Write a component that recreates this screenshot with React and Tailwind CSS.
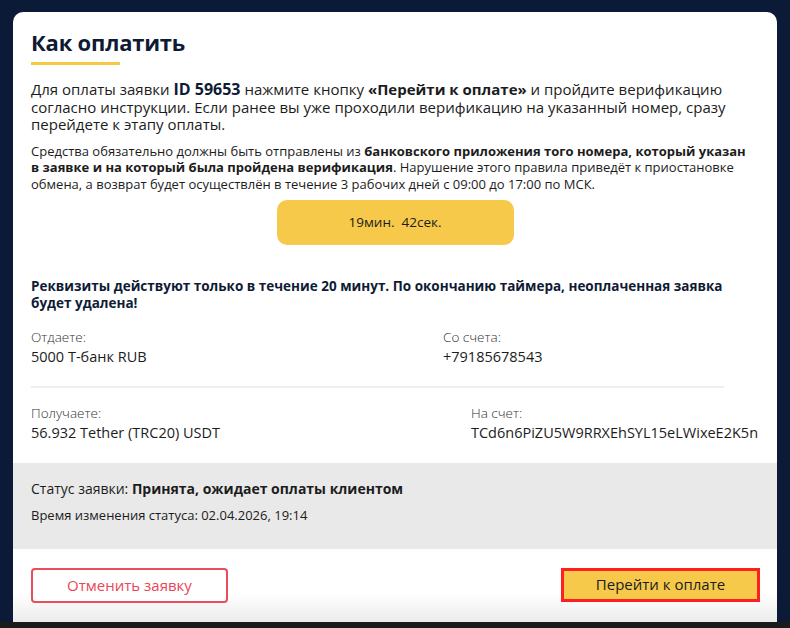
export default function App() {
  return (
    <div
      className="w-[790px] h-[628px] overflow-hidden bg-[#0b1a36] flex flex-col"
      style={{ fontFamily: '"Open Sans", "Noto Sans", sans-serif' }}
    >
      <div className="flex-1 px-[13px] pt-[12px] flex flex-col">
        <div className="flex-1 bg-white rounded-t-[10px] flex flex-col overflow-hidden">
          <div className="px-[18px] pt-[16px]">
            <h1 className="text-[22px] leading-[28px] font-bold tracking-[-0.2px] text-[#0f1b35]">Как оплатить</h1>
            <div className="mt-[6px] w-[89px] h-[3px] bg-[#f5c842]" />

            <p className="mt-[16px] text-[15px] leading-[17.5px] text-[#1c1c1c]">
              Для оплаты заявки <b className="text-[#0f1b35] text-[16px] leading-[17.5px]">ID 59653</b> нажмите кнопку{' '}
              <b>«Перейти к оплате»</b> и пройдите верификацию согласно инструкции. Если ранее вы уже
              проходили верификацию на указанный номер, сразу перейдете к этапу оплаты.
            </p>

            <p className="mt-[9px] text-[13px] leading-[16.5px] text-[#1c1c1c]">
              Средства обязательно должны быть отправлены из{' '}
              <b>банковского приложения того номера, который указан в{'\u00a0'}заявке и на который была пройдена верификация</b>.
              Нарушение этого правила приведёт к приостановке обмена, а возврат будет осуществлён в течение 3
              рабочих дней с 09:00 до 17:00 по МСК.
            </p>

            <div className="flex justify-center mt-[8px]">
              <div className="w-[237px] h-[45px] rounded-[10px] bg-[#f7c94b] flex items-center justify-center text-[13.5px] text-[#1c1c1c]">
                19мин.&nbsp;&nbsp;42сек.
              </div>
            </div>

            <p className="mt-[33px] text-[13.5px] leading-[17px] font-bold text-[#0f1b35]">
              Реквизиты действуют только в течение 20 минут. По окончанию таймера, неоплаченная заявка будет
              удалена!
            </p>

            <div className="mt-[16px] flex">
              <div className="w-[412px]">
                <div className="text-[13.5px] leading-[19px] font-light text-[#333]">Отдаете:</div>
                <div className="text-[14.5px] leading-[19px] text-[#1c1c1c]">5000 Т-банк RUB</div>
              </div>
              <div>
                <div className="text-[13.5px] leading-[19px] font-light text-[#333]">Со счета:</div>
                <div className="text-[14.5px] leading-[19px] text-[#1c1c1c]">+79185678543</div>
              </div>
            </div>

            <div className="mt-[20px] w-[693px] h-[1.5px] bg-[#eeeeee]" />

            <div className="mt-[16px] flex">
              <div className="w-[440px]">
                <div className="text-[13.5px] leading-[19px] font-light text-[#333]">Получаете:</div>
                <div className="text-[14.5px] leading-[19px] text-[#1c1c1c]">56.932 Tether (TRC20) USDT</div>
              </div>
              <div>
                <div className="text-[13.5px] leading-[19px] font-light text-[#333]">На счет:</div>
                <div className="text-[14.5px] leading-[19px] text-[#1c1c1c]">TCd6n6PiZU5W9RRXEhSYL15eLWixeE2K5n</div>
              </div>
            </div>
          </div>

          <div className="mt-[21px] h-[86px] shrink-0 bg-[#e9e9e9] px-[18px] pt-[16px]">
            <div className="text-[14px] leading-[20px] text-[#1c1c1c]">
              Статус заявки: <b>Принята, ожидает оплаты клиентом</b>
            </div>
            <div className="mt-[6px] text-[13px] leading-[20px] text-[#1c1c1c]">
              Время изменения статуса: 02.04.2026, 19:14
            </div>
          </div>

          <div className="flex-1 px-[18px] pt-[19px] flex justify-between items-start bg-gradient-to-b from-white from-60% to-[#ececec]">
            <button className="w-[197px] h-[35px] rounded-[4px] border-2 border-[#ea4c5b] text-[#e94656] text-[15px] bg-white">
              Отменить заявку
            </button>
            <button className="w-[199px] h-[34px] mr-[-1px] border-[3px] border-[#fe2020] bg-[#f7c94b] text-[#1c1c1c] text-[15px]">
              Перейти к оплате
            </button>
          </div>
        </div>
      </div>
      <div className="h-[6px] bg-[#1b1b1b]" />
    </div>
  )
}
